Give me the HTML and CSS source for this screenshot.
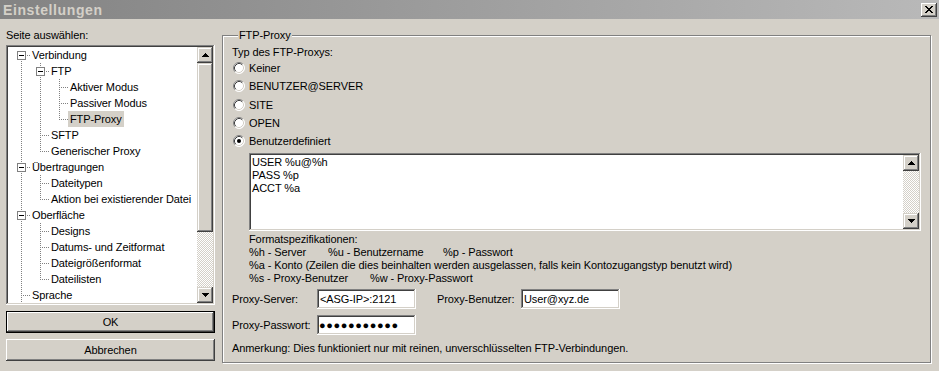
FILE: index.html
```html
<!DOCTYPE html>
<html lang="de">
<head>
<meta charset="utf-8">
<title>Einstellungen</title>
<link rel="stylesheet" href="styles.css">
</head>
<body>
<div class="window">
  <div class="titlebar">
    <span class="title">Einstellungen</span>
    <span class="close"><svg width="8" height="7" viewBox="0 0 8 7"><path d="M0 0h2v1H0zM6 0h2v1H6zM1 1h2v1H1zM5 1h2v1H5zM2 2h4v1H2zM3 3h2v1H3zM2 4h4v1H2zM1 5h2v1H1zM5 5h2v1H5zM0 6h2v1H0zM6 6h2v1H6z" fill="#000"/></svg></span>
  </div>
  <div class="body">
    <div class="left">
      <div class="caption">Seite auswählen:</div>
      <div class="tree sunken">
        <div class="tree-items">
          <div class="row"><span class="c x down"><span class="box"></span></span><span class="lbl">Verbindung</span></div>
          <div class="row"><span class="c v"></span><span class="c x both"><span class="box"></span></span><span class="lbl">FTP</span></div>
          <div class="row"><span class="c v"></span><span class="c v"></span><span class="c t"></span><span class="lbl">Aktiver Modus</span></div>
          <div class="row"><span class="c v"></span><span class="c v"></span><span class="c t"></span><span class="lbl">Passiver Modus</span></div>
          <div class="row"><span class="c v"></span><span class="c v"></span><span class="c e"></span><span class="lbl sel">FTP-Proxy</span></div>
          <div class="row"><span class="c v"></span><span class="c t"></span><span class="lbl">SFTP</span></div>
          <div class="row"><span class="c v"></span><span class="c e"></span><span class="lbl">Generischer Proxy</span></div>
          <div class="row"><span class="c x both"><span class="box"></span></span><span class="lbl">Übertragungen</span></div>
          <div class="row"><span class="c v"></span><span class="c t"></span><span class="lbl">Dateitypen</span></div>
          <div class="row"><span class="c v"></span><span class="c e"></span><span class="lbl">Aktion bei existierender Datei</span></div>
          <div class="row"><span class="c x both"><span class="box"></span></span><span class="lbl">Oberfläche</span></div>
          <div class="row"><span class="c v"></span><span class="c t"></span><span class="lbl">Designs</span></div>
          <div class="row"><span class="c v"></span><span class="c t"></span><span class="lbl">Datums- und Zeitformat</span></div>
          <div class="row"><span class="c v"></span><span class="c t"></span><span class="lbl">Dateigrößenformat</span></div>
          <div class="row"><span class="c v"></span><span class="c e"></span><span class="lbl">Dateilisten</span></div>
          <div class="row"><span class="c t"></span><span class="lbl">Sprache</span></div>
        </div>
        <div class="vscroll">
          <div class="sb-btn raised"><svg width="7" height="4" viewBox="0 0 7 4"><path d="M3 0h1v1h1v1h1v1h1v1H0V3h1V2h1V1h1z"/></svg></div>
          <div class="sb-thumb raised"></div>
          <div class="sb-track"></div>
          <div class="sb-btn raised"><svg width="7" height="4" viewBox="0 0 7 4"><path d="M0 0h7v1H6v1H5v1H4v1H3V3H2V2H1V1H0z"/></svg></div>
        </div>
      </div>
      <button class="btn default">OK</button>
      <button class="btn">Abbrechen</button>
    </div>

    <fieldset class="group">
      <legend>FTP-Proxy</legend>
      <div class="line typ">Typ des FTP-Proxys:</div>
      <div class="radios">
        <div class="radio"><svg class="rb" width="12" height="12" viewBox="0 0 12 12"><circle cx="6" cy="6" r="5.5" fill="#fff"/><path d="M2.11 9.89A5.5 5.5 0 0 1 9.89 2.11" fill="none" stroke="#808080"/><path d="M9.89 2.11A5.5 5.5 0 0 1 2.11 9.89" fill="none" stroke="#fff"/><path d="M2.82 9.18A4.5 4.5 0 0 1 9.18 2.82" fill="none" stroke="#404040"/><path d="M9.18 2.82A4.5 4.5 0 0 1 2.82 9.18" fill="none" stroke="#d4d0c8"/></svg><span>Keiner</span></div>
        <div class="radio"><svg class="rb" width="12" height="12" viewBox="0 0 12 12"><circle cx="6" cy="6" r="5.5" fill="#fff"/><path d="M2.11 9.89A5.5 5.5 0 0 1 9.89 2.11" fill="none" stroke="#808080"/><path d="M9.89 2.11A5.5 5.5 0 0 1 2.11 9.89" fill="none" stroke="#fff"/><path d="M2.82 9.18A4.5 4.5 0 0 1 9.18 2.82" fill="none" stroke="#404040"/><path d="M9.18 2.82A4.5 4.5 0 0 1 2.82 9.18" fill="none" stroke="#d4d0c8"/></svg><span>BENUTZER@SERVER</span></div>
        <div class="radio"><svg class="rb" width="12" height="12" viewBox="0 0 12 12"><circle cx="6" cy="6" r="5.5" fill="#fff"/><path d="M2.11 9.89A5.5 5.5 0 0 1 9.89 2.11" fill="none" stroke="#808080"/><path d="M9.89 2.11A5.5 5.5 0 0 1 2.11 9.89" fill="none" stroke="#fff"/><path d="M2.82 9.18A4.5 4.5 0 0 1 9.18 2.82" fill="none" stroke="#404040"/><path d="M9.18 2.82A4.5 4.5 0 0 1 2.82 9.18" fill="none" stroke="#d4d0c8"/></svg><span>SITE</span></div>
        <div class="radio"><svg class="rb" width="12" height="12" viewBox="0 0 12 12"><circle cx="6" cy="6" r="5.5" fill="#fff"/><path d="M2.11 9.89A5.5 5.5 0 0 1 9.89 2.11" fill="none" stroke="#808080"/><path d="M9.89 2.11A5.5 5.5 0 0 1 2.11 9.89" fill="none" stroke="#fff"/><path d="M2.82 9.18A4.5 4.5 0 0 1 9.18 2.82" fill="none" stroke="#404040"/><path d="M9.18 2.82A4.5 4.5 0 0 1 2.82 9.18" fill="none" stroke="#d4d0c8"/></svg><span>OPEN</span></div>
        <div class="radio"><svg class="rb" width="12" height="12" viewBox="0 0 12 12"><circle cx="6" cy="6" r="5.5" fill="#fff"/><path d="M2.11 9.89A5.5 5.5 0 0 1 9.89 2.11" fill="none" stroke="#808080"/><path d="M9.89 2.11A5.5 5.5 0 0 1 2.11 9.89" fill="none" stroke="#fff"/><path d="M2.82 9.18A4.5 4.5 0 0 1 9.18 2.82" fill="none" stroke="#404040"/><path d="M9.18 2.82A4.5 4.5 0 0 1 2.82 9.18" fill="none" stroke="#d4d0c8"/><circle cx="6" cy="6" r="2" fill="#000"/></svg><span>Benutzerdefiniert</span></div>
      </div>

      <div class="ta sunken">
        <div class="ta-text">
          <div>USER %u@%h</div>
          <div>PASS %p</div>
          <div>ACCT %a</div>
        </div>
        <div class="vscroll">
          <div class="sb-btn raised"><svg width="7" height="4" viewBox="0 0 7 4"><path d="M3 0h1v1h1v1h1v1h1v1H0V3h1V2h1V1h1z"/></svg></div>
          <div class="sb-track"></div>
          <div class="sb-btn raised"><svg width="7" height="4" viewBox="0 0 7 4"><path d="M0 0h7v1H6v1H5v1H4v1H3V3H2V2H1V1H0z"/></svg></div>
        </div>
      </div>

      <div class="spec">
        <div class="line">Formatspezifikationen:</div>
        <div class="line cols"><span class="w78">%h - Server</span><span class="w115">%u - Benutzername</span><span>%p - Passwort</span></div>
        <div class="line">%a - Konto (Zeilen die dies beinhalten werden ausgelassen, falls kein Kontozugangstyp benutzt wird)</div>
        <div class="line cols"><span class="w120">%s - Proxy-Benutzer</span><span>%w - Proxy-Passwort</span></div>
      </div>

      <div class="frow first">
        <span class="flabel">Proxy-Server:</span>
        <span class="field sunken">&lt;ASG-IP&gt;:2121</span>
        <span class="flabel second">Proxy-Benutzer:</span>
        <span class="field sunken">User@xyz.de</span>
      </div>
      <div class="frow">
        <span class="flabel">Proxy-Passwort:</span>
        <span class="field sunken pw">●●●●●●●●●●●</span>
      </div>
      <div class="line note">Anmerkung: Dies funktioniert nur mit reinen, unverschlüsselten FTP-Verbindungen.</div>
    </fieldset>
  </div>
</div>
</body>
</html>
```
FILE: styles.css
```css
* { box-sizing: border-box; }
html, body { margin: 0; padding: 0; }
body {
  width: 939px;
  height: 371px;
  overflow: hidden;
  background: #d4d0c8;
  font: 11px "Liberation Sans", Arial, sans-serif;
  letter-spacing: -0.1px;
  color: #000;
  --vd: repeating-linear-gradient(to bottom, #808080 0 1px, transparent 1px 2px);
  --hd: repeating-linear-gradient(to right, #808080 0 1px, transparent 1px 2px);
}
.window { display: flex; flex-direction: column; height: 371px; }

.titlebar {
  height: 19px;
  flex: none;
  display: flex;
  align-items: center;
  justify-content: space-between;
  padding: 0 2px 0 3px;
  background: linear-gradient(to right, #838383, #b9b9b9);
}
.title { font-weight: bold; font-size: 14px; color: #d4d0c8; letter-spacing: 0.6px; }
.close {
  width: 16px; height: 14px;
  display: flex; align-items: center; justify-content: center;
  background: #d4d0c8;
  box-shadow: inset -1px -1px #404040, inset 1px 1px #fff, inset -2px -2px #808080, inset 2px 2px #d4d0c8;
}

.raised {
  background: #d4d0c8;
  box-shadow: inset -1px -1px #404040, inset 1px 1px #d4d0c8, inset -2px -2px #808080, inset 2px 2px #fff;
}
.sunken {
  background: #fff;
  box-shadow: inset -1px -1px #fff, inset 1px 1px #808080, inset -2px -2px #d4d0c8, inset 2px 2px #404040;
}

.body { flex: 1; display: flex; padding: 10px 8px 0 6px; gap: 7px; }

.left { width: 209px; flex: none; display: flex; flex-direction: column; }
.caption { height: 13px; line-height: 13px; }
.tree { margin-top: 3px; height: 260px; padding: 2px; display: flex; }
.tree-items { flex: 1; padding-left: 4px; overflow: hidden; }
.row { display: flex; height: 16px; align-items: center; }
.c { width: 19px; height: 16px; flex: none; }
.v { background: var(--vd) 9px 0 / 1px 16px no-repeat; }
.t { background: var(--vd) 9px 0 / 1px 16px no-repeat, var(--hd) 11px 8px / 8px 1px no-repeat; }
.e { background: var(--vd) 9px 0 / 1px 9px no-repeat, var(--hd) 11px 8px / 8px 1px no-repeat; }
.x { display: flex; padding: 4px 0 0 5px; }
.x.down { background: var(--vd) 9px 8px / 1px 8px no-repeat, var(--hd) 15px 8px / 4px 1px no-repeat; }
.x.both { background: var(--vd) 9px 0 / 1px 16px no-repeat, var(--hd) 15px 8px / 4px 1px no-repeat; }
.box {
  width: 9px; height: 9px;
  border: 1px solid #808080;
  background: linear-gradient(#000, #000) 1px 3px / 5px 1px no-repeat, #fff;
}
.lbl { height: 16px; line-height: 16px; padding: 0 2px; margin-left: -1px; white-space: nowrap; }
.lbl.sel { background: #d4d0c8; }

.vscroll { width: 16px; flex: none; display: flex; flex-direction: column; }
.sb-btn { height: 16px; flex: none; display: flex; align-items: center; justify-content: center; }
.sb-btn svg { fill: #000; }
.sb-thumb { height: 169px; flex: none; }
.sb-track {
  flex: 1;
  background: repeating-conic-gradient(#fff 0 25%, #d4d0c8 0 50%) 0 0 / 2px 2px;
}

.btn {
  font: inherit;
  letter-spacing: inherit;
  color: #000;
  height: 22px;
  margin-top: 6px;
  border: none;
  padding: 0;
  background: #d4d0c8;
  box-shadow: inset -1px -1px #404040, inset 1px 1px #fff, inset -2px -2px #808080, inset 2px 2px #d4d0c8;
}
.btn.default {
  border: 1px solid #000;
}

.group {
  flex: 1;
  margin: 0;
  min-width: 0;
  height: 334px;
  padding: 0 9px 0 9px;
  border: 1px solid #808080;
  box-shadow: inset 1px 1px #fff, 1px 1px #fff;
}
.group legend { padding: 0 1px; margin-left: 6px; line-height: 13px; background: #d4d0c8; }

.line { line-height: 13px; height: 13px; white-space: nowrap; }
.typ { margin-top: 4px; }
.radios { margin-top: 0; padding-left: 1px; }
.radio { height: 18.25px; display: flex; align-items: center; }
.rb { flex: none; margin-right: 4px; }

.ta { margin: 3px 0 0 17px; height: 78px; padding: 2px; display: flex; }
.ta-text { flex: 1; padding: 1px 1px; line-height: 13px; }

.spec { margin: 2px 0 0 17px; }
.cols span { display: inline-block; }
.w78 { width: 79px; }
.w115 { width: 115px; }
.w120 { width: 121px; }

.frow { display: flex; align-items: center; height: 20px; margin-top: 6px; }
.frow.first { margin-top: 4px; }
.flabel { width: 85px; flex: none; }
.flabel.second { width: 84px; margin-left: 21px; }
.field { width: 99px; height: 20px; flex: none; padding: 0 3px; line-height: 20px; white-space: nowrap; }
.pw { font-size: 11px; letter-spacing: 0.6px; padding-left: 2px; }
.note { margin-top: 7px; }
```
